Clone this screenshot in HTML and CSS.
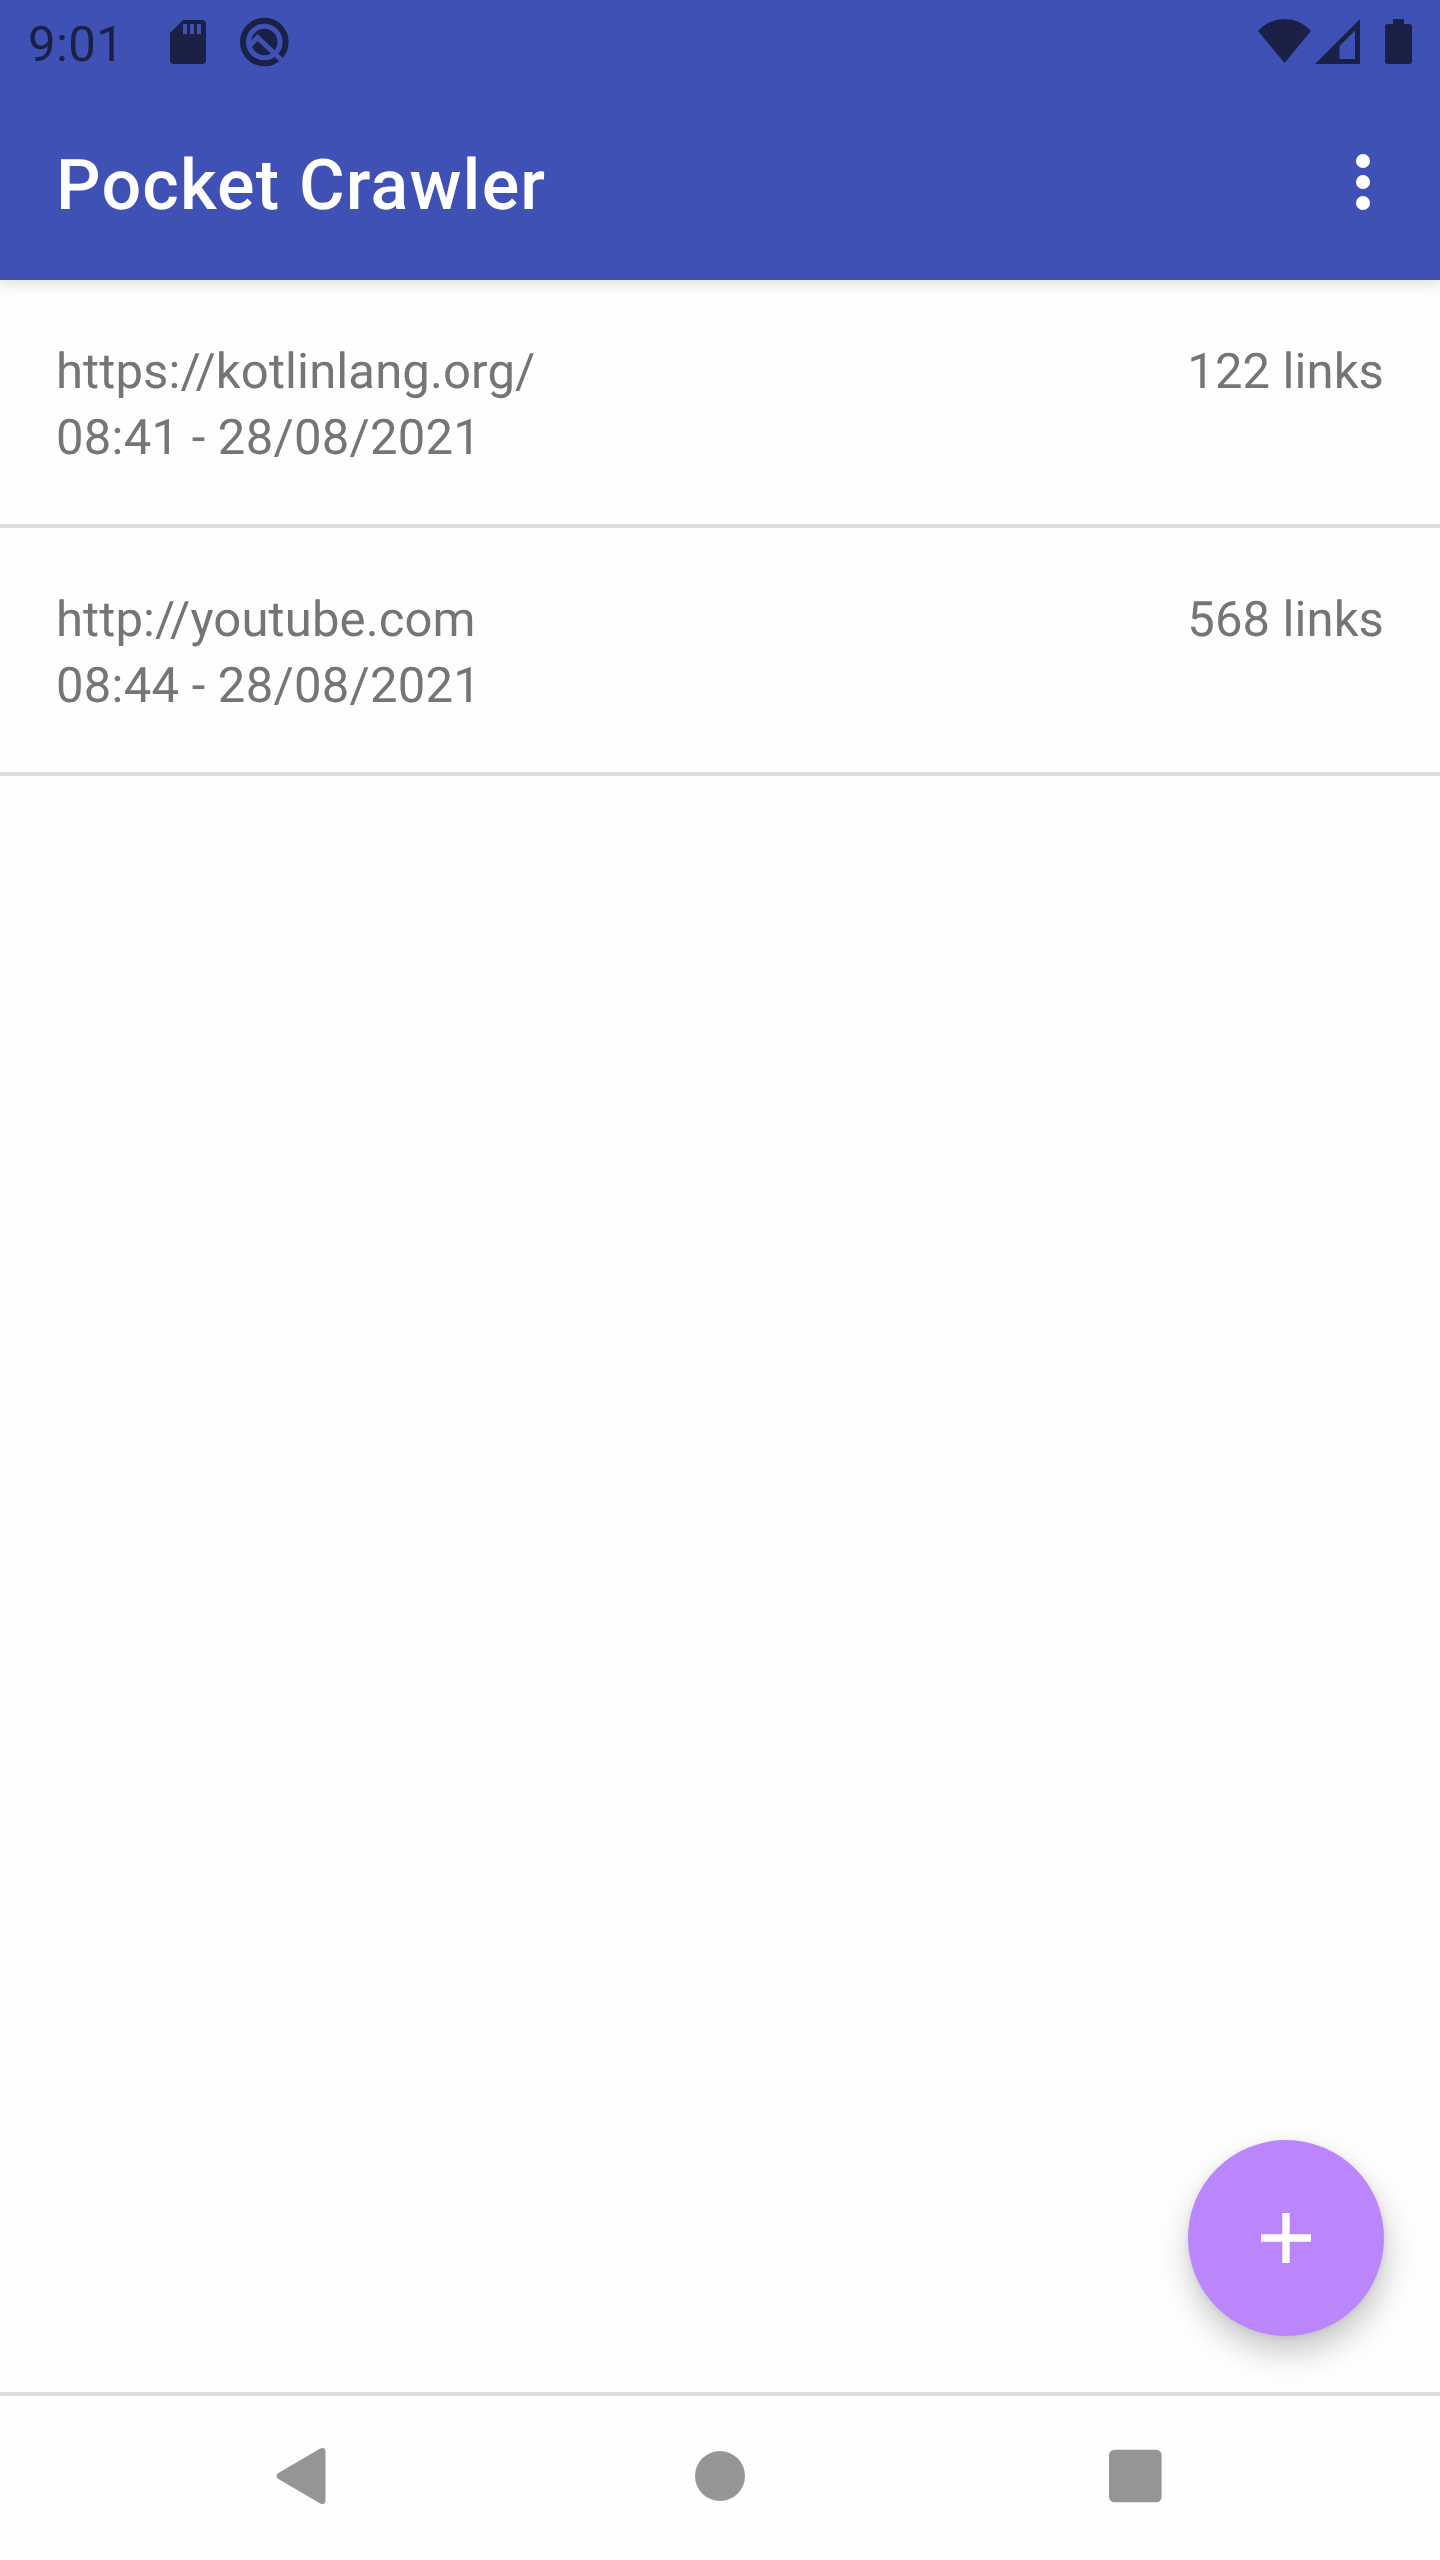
FILE: index.html
```html
<!DOCTYPE html>
<html lang="en">
<head>
  <meta charset="UTF-8" />
  <meta name="viewport" content="width=device-width, initial-scale=1.0"/>
  <title>Pocket Crawler</title>
  <link rel="stylesheet" href="styles.css">
</head>
<body>
  <div class="screen">
    <header class="app-header">
      <div class="status-bar">
        <span class="clock">9:01</span>
        <svg class="icon-sd" width="36" height="44" viewBox="0 0 36 44">
          <path fill-rule="evenodd" d="M13 0H32Q36 0 36 4V40Q36 44 32 44H4Q0 44 0 40V13ZM13 4V14H17V4ZM20 4V14H24V4ZM27 4V14H31V4Z"/>
        </svg>
        <svg class="icon-debug" width="50" height="50" viewBox="0 0 50 50">
          <circle class="ring" cx="24.3" cy="25" r="21.3"/>
          <circle cx="24.3" cy="25" r="13.2"/>
          <path class="cut" d="M8 30.5L17.5 20.5L43 44.5"/>
        </svg>
        <span class="spacer"></span>
        <svg class="icon-wifi" width="53" height="44" viewBox="0 0 53 44">
          <path d="M0 12Q11 0 26.5 0T53 12L26.5 44Z"/>
        </svg>
        <svg class="icon-signal" width="45" height="45" viewBox="0 0 45 45">
          <path fill-rule="evenodd" d="M45 0V45H0ZM40 11.5L24.5 27V40H40Z"/>
        </svg>
        <svg class="icon-battery" width="27" height="45" viewBox="0 0 27 45">
          <path d="M8 0H19V5H24Q27 5 27 8V42Q27 45 24 45H3Q0 45 0 42V8Q0 5 3 5H8Z"/>
        </svg>
      </div>
      <div class="toolbar">
        <h1>Pocket Crawler</h1>
        <svg class="icon-more" width="14" height="56" viewBox="0 0 14 56">
          <circle cx="7" cy="7" r="7"/>
          <circle cx="7" cy="28" r="7"/>
          <circle cx="7" cy="49" r="7"/>
        </svg>
      </div>
    </header>

    <main class="crawl-list">
      <div class="crawl">
        <div class="crawl-info">
          <div class="crawl-url">https://kotlinlang.org/</div>
          <div class="crawl-date">08:41 - 28/08/2021</div>
        </div>
        <div class="crawl-count">122 links</div>
      </div>
      <div class="crawl">
        <div class="crawl-info">
          <div class="crawl-url">http://youtube.com</div>
          <div class="crawl-date">08:44 - 28/08/2021</div>
        </div>
        <div class="crawl-count">568 links</div>
      </div>
    </main>

    <button class="fab" aria-label="Add">
      <svg width="50" height="50" viewBox="0 0 50 50">
        <path d="M21.3 0H28.7V21.3H50V28.7H28.7V50H21.3V28.7H0V21.3H21.3Z"/>
      </svg>
    </button>

    <nav class="nav-bar">
      <svg width="140" height="60" viewBox="0 0 140 60">
        <path d="M85.2 2.6Q90.5 0.5 90.5 6V54Q90.5 59.5 85.2 57.4L43 32.8Q40 30 43 27.2Z"/>
      </svg>
      <svg width="140" height="60" viewBox="0 0 140 60">
        <circle cx="70" cy="30" r="25"/>
      </svg>
      <svg width="140" height="60" viewBox="0 0 140 60">
        <rect x="43" y="3.7" width="52.6" height="52.6" rx="5.5"/>
      </svg>
    </nav>
  </div>
</body>
</html>
```
FILE: styles.css
```css
* {
  box-sizing: border-box;
}
body {
  margin: 0;
  font-family: Roboto, sans-serif;
  text-rendering: geometricPrecision;
  background: #fefefe;
}
.screen {
  position: relative;
  display: flex;
  flex-direction: column;
  width: 1440px;
  height: 2560px;
}

.app-header {
  height: 280px;
  background: #3f51b5;
  box-shadow: 0 4px 14px rgba(0,0,0,0.13);
}
.status-bar {
  display: flex;
  align-items: flex-start;
  height: 84px;
  padding: 19px 28px 0;
  fill: #1a2046;
  color: #1a2046;
}
.clock {
  width: 142px;
  margin-top: -3px;
  font-size: 49px;
  line-height: 57px;
  letter-spacing: 0.4px;
}
.icon-sd {
  margin-top: 1px;
}
.icon-debug {
  margin: -2px 0 0 34px;
}
.icon-debug .ring {
  fill: none;
  stroke: #1a2046;
  stroke-width: 6;
}
.icon-debug .cut {
  fill: none;
  stroke: #3f51b5;
  stroke-width: 5;
}
.spacer {
  flex: 1;
}
.icon-signal {
  margin-left: 4px;
}
.icon-battery {
  margin-left: 25px;
}

.toolbar {
  display: flex;
  justify-content: space-between;
  height: 196px;
  padding: 70px 70px 0 56px;
}
.toolbar h1 {
  margin: -9px 0 0;
  font-size: 70px;
  font-weight: 500;
  line-height: 82px;
  letter-spacing: 1.2px;
  color: #fff;
}
.icon-more {
  fill: #fff;
}

.crawl-list {
  flex: 1;
}
.crawl {
  display: flex;
  justify-content: space-between;
  height: 248px;
  padding: 59px 56px 0;
  border-bottom: 4px solid #dedede;
  font-size: 49px;
  line-height: 66px;
  color: #757575;
}
.crawl-url {
  letter-spacing: 0.13px;
}
.crawl-date {
  letter-spacing: 0.25px;
}
.crawl-count {
  letter-spacing: 0.1px;
}

.fab {
  position: absolute;
  right: 56px;
  bottom: 224px;
  display: flex;
  align-items: center;
  justify-content: center;
  width: 196px;
  height: 196px;
  padding: 0;
  border: none;
  border-radius: 50%;
  background: #bb86fc;
  box-shadow: 2px 16px 32px rgba(0,0,0,0.22), 0 1px 6px rgba(0,0,0,0.08);
  fill: #fff;
}

.nav-bar {
  display: flex;
  justify-content: center;
  align-items: center;
  gap: 275.5px;
  height: 168px;
  padding-bottom: 4px;
  border-top: 4px solid #dedede;
  fill: #959595;
}
```
